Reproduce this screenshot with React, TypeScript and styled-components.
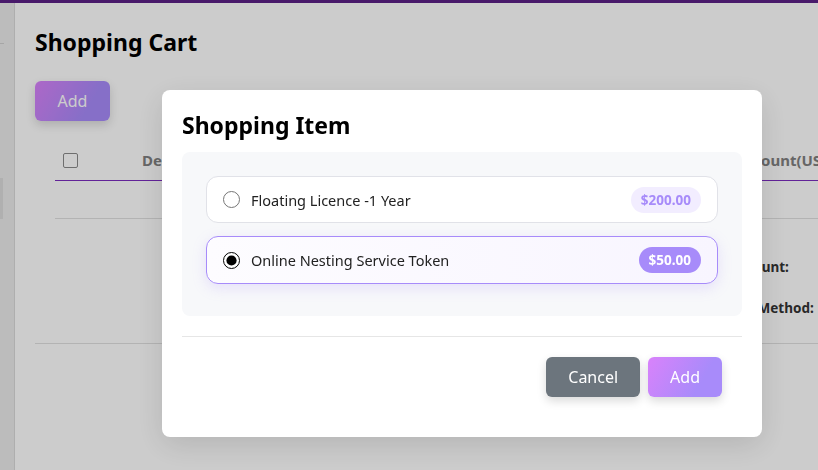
import { FC, useState } from "react";
import styled, { createGlobalStyle, css } from "styled-components";

const GlobalStyle = createGlobalStyle`
	html, body {
		margin: 0;
		padding: 0;
		background: #fff;
		font-family: "Noto Sans", "Open Sans", sans-serif;
		overflow: hidden;
	}
	* {
		box-sizing: border-box;
	}
`;

const StyledTopBar = styled.div`
	height: 3px;
	background: #5c2186;
`;

const StyledLayout = styled.div`
	display: flex;
	height: 467px;
`;

const StyledSidebar = styled.aside`
	width: 15px;
	flex-shrink: 0;
	background: #ececec;
	border-right: 1px solid #dadada;
	display: flex;
	flex-direction: column;
	padding-top: 40px;
	gap: 134px;
`;

const StyledSideMark = styled.div<{ $tall?: boolean }>`
	width: ${(p) => (p.$tall ? "3px" : "4px")};
	height: ${(p) => (p.$tall ? "41px" : "1px")};
	background: ${(p) => (p.$tall ? "#dcdcdc" : "#d0d0d0")};
`;

const StyledMain = styled.main`
	flex: 1;
	min-width: 0;
	padding: 24px 0 0 20px;
	overflow: hidden;
`;

const StyledTitle = styled.h1`
	margin: 0;
	font-size: 23px;
	line-height: 30px;
	font-weight: 700;
	color: #000;
`;

const gradientButton = css`
	background: linear-gradient(120deg, #d982fb 0%, #a88bfa 70%);
	color: #fff;
`;

const StyledPageButton = styled.button`
	${gradientButton};
	margin-top: 24px;
	width: 75px;
	height: 40px;
	border: none;
	border-radius: 6px;
	font-family: inherit;
	font-size: 16px;
	box-shadow: 0 4px 10px rgba(0, 0, 0, 0.15);
`;

const StyledTable = styled.div`
	margin: 19px 0 0 20px;
`;

const StyledHeadRow = styled.div`
	display: grid;
	grid-template-columns: 72px 1fr 97px;
	align-items: center;
	height: 41px;
	border-bottom: 1px solid #7b2cbf;
`;

const StyledEmptyRow = styled.div`
	height: 38px;
	border-bottom: 1px solid #e0e0e0;
`;

const StyledHeadCell = styled.div`
	padding-left: 15px;
	font-size: 15px;
	font-weight: 700;
	color: #808080;
	white-space: nowrap;
`;

const StyledCheckCell = styled.div`
	padding-left: 8px;
	display: flex;
	align-items: center;
`;

const StyledCheckBox = styled.span`
	width: 15px;
	height: 15px;
	border: 1px solid #8a8a8a;
	border-radius: 2px;
	background: #fff;
`;

const StyledSummary = styled.div`
	display: grid;
	grid-template-columns: 1fr 124px;
	row-gap: 19px;
	padding: 37px 0 24px;
	border-bottom: 1px solid #e0e0e0;
`;

const StyledSummaryLabel = styled.div`
	grid-column: 2;
	font-size: 13.5px;
	line-height: 22px;
	font-weight: 700;
	color: #333;
	white-space: nowrap;
`;

const StyledOverlay = styled.div`
	position: fixed;
	inset: 0;
	background: rgba(0, 0, 0, 0.2);
	display: flex;
	align-items: flex-start;
	padding: 90px 0 0 162px;
`;

const StyledModal = styled.div`
	width: 600px;
	background: #fff;
	border-radius: 8px;
	padding: 20px;
	box-shadow: 0 8px 30px rgba(0, 0, 0, 0.12);
`;

const StyledModalTitle = styled.h2`
	margin: 0 0 12px;
	font-size: 23px;
	line-height: 30px;
	font-weight: 700;
	color: #000;
`;

const StyledOptions = styled.div`
	background: #f7f8fa;
	border-radius: 8px;
	padding: 24px 24px 32px;
	display: flex;
	flex-direction: column;
	gap: 13px;
	margin-bottom: 20px;
`;

const StyledOption = styled.label<{ $selected: boolean }>`
	display: flex;
	align-items: center;
	gap: 11px;
	height: ${(p) => (p.$selected ? "48px" : "47px")};
	padding: 0 16px;
	border-radius: 12px;
	border: 1px solid ${(p) => (p.$selected ? "#a78bfa" : "#e1e2e8")};
	background: ${(p) =>
		p.$selected ? "linear-gradient(90deg, #fdfcff, #f8f5ff)" : "#fff"};
	box-shadow: ${(p) =>
		p.$selected ? "0 4px 14px rgba(167, 139, 250, 0.22)" : "none"};
	cursor: pointer;
`;

const StyledRadio = styled.input`
	width: 17px;
	height: 17px;
	margin: 0;
	accent-color: #000;
`;

const StyledOptionName = styled.span`
	flex: 1;
	font-size: 14.5px;
	color: #222;
`;

const StyledPrice = styled.span<{ $selected: boolean }>`
	height: 26px;
	line-height: 26px;
	padding: 0 10px;
	border-radius: 13px;
	font-size: 13.5px;
	font-weight: 700;
	color: ${(p) => (p.$selected ? "#fff" : "#a78bfa")};
	background: ${(p) => (p.$selected ? "#a78bfa" : "#f2edff")};
`;

const StyledFooter = styled.div`
	border-top: 1px solid #e6e6e6;
	display: flex;
	justify-content: flex-end;
	gap: 8px;
	padding: 20px 20px 20px 0;
`;

const StyledModalButton = styled.button<{ $primary?: boolean }>`
	height: 40px;
	padding: 0 22px;
	border: none;
	border-radius: 6px;
	font-family: inherit;
	font-size: 16px;
	color: #fff;
	background: #6c757d;
	box-shadow: 0 4px 10px rgba(0, 0, 0, 0.15);
	cursor: pointer;
	${(p) => p.$primary && gradientButton};
`;

const items = [
	{ id: 1, name: "Floating Licence -1 Year", price: "$200.00" },
	{ id: 2, name: "Online Nesting Service Token", price: "$50.00" },
];

const App: FC = () => {
	const [selected, setSelected] = useState(2);

	return (
		<>
			<GlobalStyle />
			<StyledTopBar />
			<StyledLayout>
				<StyledSidebar>
					<StyledSideMark />
					<StyledSideMark $tall />
				</StyledSidebar>
				<StyledMain>
					<StyledTitle>Shopping Cart</StyledTitle>
					<StyledPageButton>Add</StyledPageButton>
					<StyledTable>
						<StyledHeadRow>
							<StyledCheckCell>
								<StyledCheckBox />
							</StyledCheckCell>
							<StyledHeadCell>Description</StyledHeadCell>
							<StyledHeadCell>Amount(USD)</StyledHeadCell>
						</StyledHeadRow>
						<StyledEmptyRow />
					</StyledTable>
					<StyledSummary>
						<StyledSummaryLabel>Total Amount:</StyledSummaryLabel>
						<StyledSummaryLabel>Payment Method:</StyledSummaryLabel>
					</StyledSummary>
				</StyledMain>
			</StyledLayout>

			<StyledOverlay>
				<StyledModal>
					<StyledModalTitle>Shopping Item</StyledModalTitle>
					<StyledOptions>
						{items.map((item) => (
							<StyledOption key={item.id} $selected={selected === item.id}>
								<StyledRadio
									type="radio"
									name="item"
									checked={selected === item.id}
									onChange={() => setSelected(item.id)}
								/>
								<StyledOptionName>{item.name}</StyledOptionName>
								<StyledPrice $selected={selected === item.id}>
									{item.price}
								</StyledPrice>
							</StyledOption>
						))}
					</StyledOptions>
					<StyledFooter>
						<StyledModalButton>Cancel</StyledModalButton>
						<StyledModalButton $primary>Add</StyledModalButton>
					</StyledFooter>
				</StyledModal>
			</StyledOverlay>
		</>
	);
};

export default App;
